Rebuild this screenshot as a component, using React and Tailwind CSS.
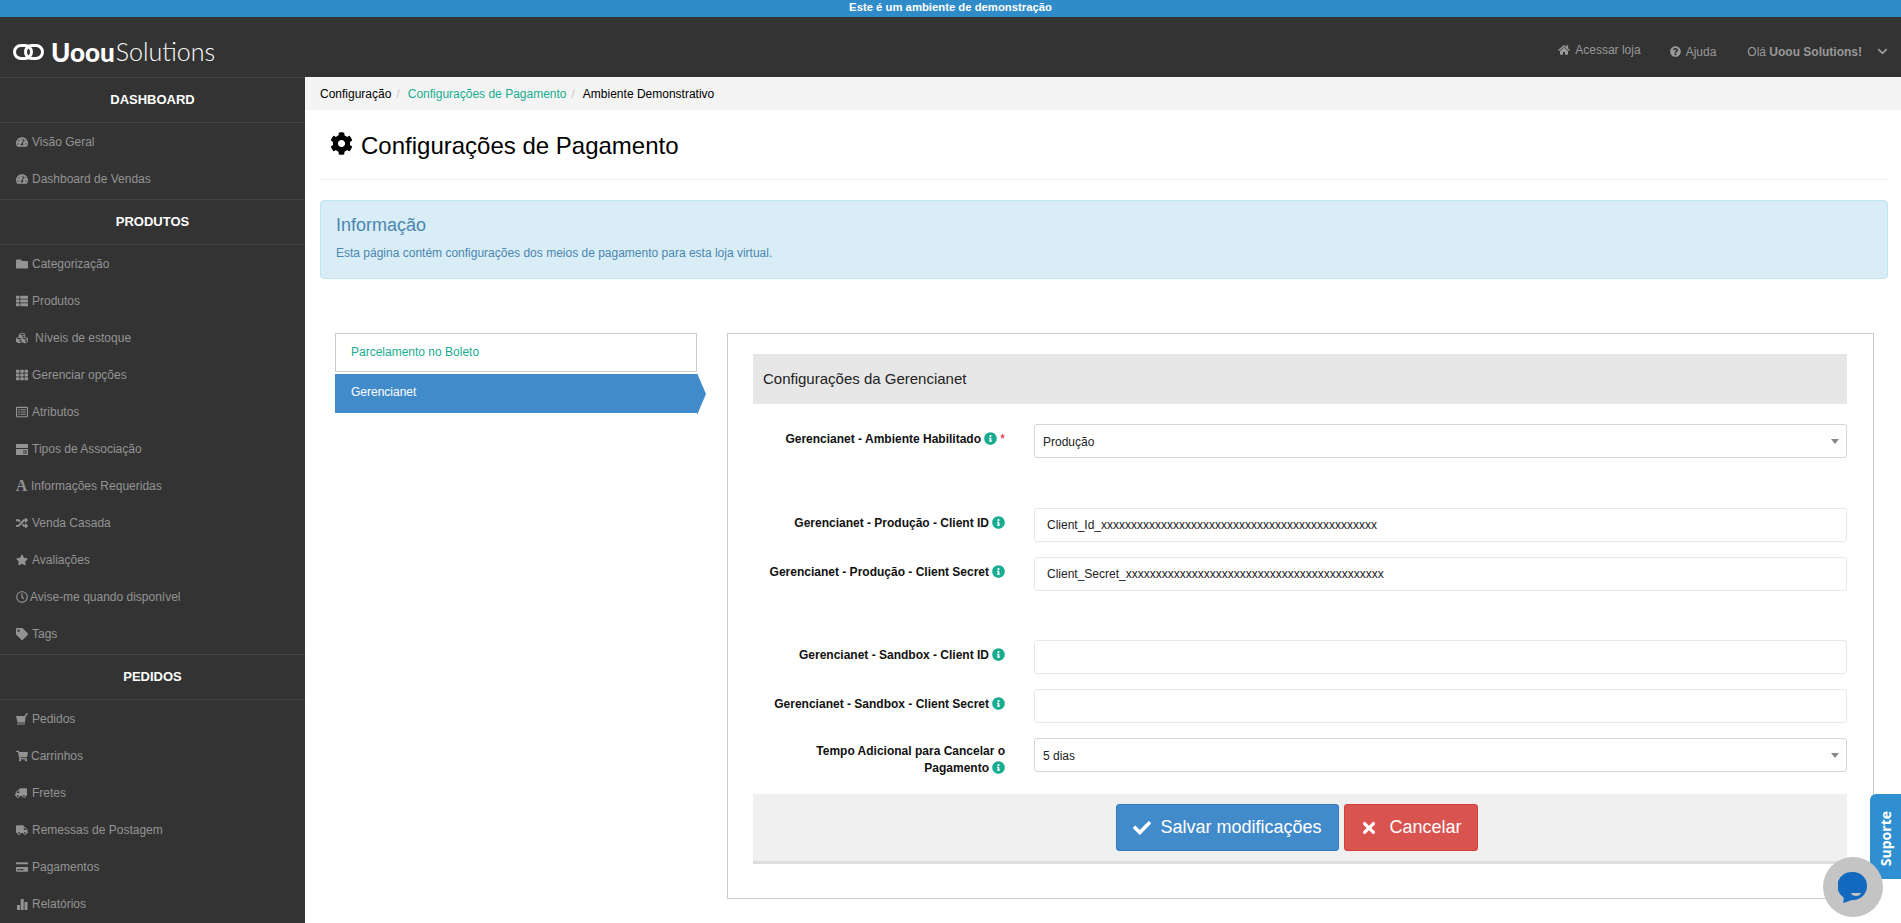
import {
  FaTachometerAlt, FaFolder, FaThList, FaCubes, FaTh, FaRegListAlt, FaRandom, FaStar, FaRegClock,
  FaTag, FaShoppingCart, FaTruck, FaCreditCard, FaHome,
  FaQuestionCircle, FaChevronDown, FaCog, FaInfoCircle, FaCheck, FaTimes,
} from "react-icons/fa";

const SerifA = () => <span className="font-['Liberation_Serif'] font-bold text-[16px] leading-none">A</span>;

// these three have no good match in the icon packages
const OrderBag = () => (
  <svg width="12" height="12" viewBox="0 0 12 12" fill="currentColor">
    <path d="M0 3h8.5L10.5 0 12 .5 9.5 4 9 9.5H1.5z"/>
    <path d="M1 10.5h8v1H1z"/>
  </svg>
);
const TypesIcon = () => (
  <svg width="12" height="11" viewBox="0 0 12 11" fill="currentColor">
    <path d="M0 0h12v4H0z"/>
    <path d="M0 5h12v6H0zM7 6.5v1h4v-1zM7 8.5v1h4v-1z" fillRule="evenodd"/>
  </svg>
);
const BarsIcon = () => (
  <svg width="12" height="12" viewBox="0 0 12 12" fill="currentColor">
    <path d="M1 7h3v5H1zM4.7 1h3v11h-3zM8.5 4h3v8h-3z"/>
  </svg>
);

const menu = [
  {
    title: "DASHBOARD",
    items: [
      {icon: FaTachometerAlt, label: "Visão Geral"},
      {icon: FaTachometerAlt, label: "Dashboard de Vendas"},
    ],
  },
  {
    title: "PRODUTOS",
    items: [
      {icon: FaFolder, label: "Categorização"},
      {icon: FaThList, label: "Produtos"},
      {icon: FaCubes, label: "Níveis de estoque", gap: "ml-[7px]"},
      {icon: FaTh, label: "Gerenciar opções"},
      {icon: FaRegListAlt, label: "Atributos"},
      {icon: TypesIcon, label: "Tipos de Associação"},
      {icon: SerifA, label: "Informações Requeridas", gap: "ml-[3px]"},
      {icon: FaRandom, label: "Venda Casada"},
      {icon: FaStar, label: "Avaliações"},
      {icon: FaRegClock, label: "Avise-me quando disponível", gap: "ml-[2px]"},
      {icon: FaTag, label: "Tags"},
    ],
  },
  {
    title: "PEDIDOS",
    items: [
      {icon: OrderBag, label: "Pedidos"},
      {icon: FaShoppingCart, label: "Carrinhos", gap: "ml-[3px]"},
      {icon: FaTruck, label: "Fretes", flip: true},
      {icon: FaTruck, label: "Remessas de Postagem"},
      {icon: FaCreditCard, label: "Pagamentos"},
      {icon: BarsIcon, label: "Relatórios"},
    ],
  },
];

function Sidebar() {
  return (
    <aside className="w-[305px] shrink-0 bg-[#333333] text-[12px] text-[#939393]">
      {menu.map((section) => (
        <div key={section.title}>
          <div className="h-[46px] border-y border-[#444444] -mb-px flex items-center justify-center pb-[1px] text-[13px] font-bold text-white">
            {section.title}
          </div>
          <ul className="pt-px pb-[1px] mt-px">
            {section.items.map((item) => (
              <li key={item.label} className="h-[37px] pl-[15px] pb-[1px] flex items-center">
                <span className={`w-[13px] flex justify-center text-[12px] ${item.flip ? "-scale-x-100" : ""}`}>
                  <item.icon/>
                </span>
                <span className={item.gap ?? "ml-[4px]"}>{item.label}</span>
              </li>
            ))}
          </ul>
        </div>
      ))}
    </aside>
  );
}

function Logo() {
  return (
    <div className="flex items-center ml-[13px] mt-[9px] text-white">
      <svg width="31" height="16" viewBox="0 0 31 16" fill="none" stroke="white" strokeWidth="3">
        <rect x="1.5" y="1.5" width="17" height="13" rx="6.5"/>
        <rect x="12.5" y="1.5" width="17" height="13" rx="6.5"/>
      </svg>
      <span className="ml-[7px] font-['Lato'] font-black text-[26px] leading-none">Uoou</span>
      <span className="ml-[1px] font-['Lato'] font-light text-[25px] leading-none">Solutions</span>
    </div>
  );
}

function Header() {
  return (
    <header className="h-[60px] bg-[#333333] flex items-center justify-between text-[12px] text-[#999999]">
      <Logo/>
      <div className="flex items-center pr-[13px] pt-[9px]">
        <span className="flex items-center gap-[5px] -mt-[4px]"><FaHome className="text-[12px]"/>Acessar loja</span>
        <span className="flex items-center gap-[5px] ml-[29px]"><FaQuestionCircle className="text-[11px]"/>Ajuda</span>
        <span className="ml-[31px]">Olá <b>Uoou Solutions!</b></span>
        <FaChevronDown className="ml-[15px] text-[11px]"/>
      </div>
    </header>
  );
}

function Info() {
  return <FaInfoCircle className="inline text-[13px] text-[#18ac90] ml-[3px] -mt-[2px]"/>;
}

function Field({label, value, select, className = "", required, twoLines}) {
  return (
    <div className={`flex ${className}`}>
      <div className={`w-[252px] h-[34px] shrink-0 text-right text-[12px] font-bold text-[#111111] ${twoLines ? "pt-[5px] leading-[17px]" : "pt-[6px]"}`}>
        {label}<Info/>{required && <span className="text-red-600 font-normal"> *</span>}
      </div>
      {select ? (
        <div className="ml-[29px] flex-1 h-[34px] border border-[#d5d5d5] rounded-[3px] flex items-center justify-between pl-[8px] pr-[7px] text-[12px] text-[#222222]">
          <span className="pt-[2px]">{value}</span>
          <span className="w-0 h-0 border-x-[4px] border-x-transparent border-t-[5px] border-t-[#888888]"></span>
        </div>
      ) : (
        <input
          readOnly
          value={value ?? ""}
          className="ml-[29px] flex-1 h-[34px] border border-[#e8e8e8] rounded-[3px] pl-[12px] text-[12px] text-[#222222] outline-none"
        />
      )}
    </div>
  );
}

export default function App() {
  const xs = "x".repeat(46);
  const xs2 = "x".repeat(43);
  return (
    <div className="relative h-[923px] overflow-hidden bg-white font-['Liberation_Sans',sans-serif]">
      <div className="h-[17px] bg-[#308cc9] text-center text-[11.3px] leading-[15px] font-bold text-white">
        Este é um ambiente de demonstração
      </div>
      <Header/>
      <div className="flex">
        <Sidebar/>
        <main className="flex-1 min-w-0">
          <div className="h-[33px] bg-[#f4f4f4] pl-[15px] flex items-center text-[12px] text-black">
            <span>Configuração</span>
            <span className="text-[#cccccc] ml-[5px]">/</span>
            <span className="text-[#18ac90] ml-[8px]">Configurações de Pagamento</span>
            <span className="text-[#cccccc] ml-[5px]">/</span>
            <span className="ml-[8px]">Ambiente Demonstrativo</span>
          </div>

          <div className="pl-[15px] pr-[13px]">
            <div className="h-[70px] border-b border-[#eeeeee] flex items-center pl-[10px] pt-[2px] text-[24px] text-black">
              <FaCog className="text-[23px] -mt-[5px]"/>
              <h1 className="ml-[8px]">Configurações de Pagamento</h1>
            </div>
            <div className="mt-[20px] h-[79px] bg-[#d9edf7] border border-[#bce8f1] rounded-[4px] pl-[15px] pt-[11px] text-[#4b86b0]">
              <h2 className="text-[18px] leading-[26px]">Informação</h2>
              <p className="text-[12px] mt-[6px]">Esta página contém configurações dos meios de pagamento para esta loja virtual.</p>
            </div>
          </div>

          <div className="flex items-start pl-[30px] mt-[54px]">
            <div className="w-[362px] shrink-0 text-[12px]">
              <div className="h-[39px] border border-[#cccccc] flex items-center pl-[15px] pb-[2px] text-[#18ac90]">Parcelamento no Boleto</div>
              <div className="relative mt-[2px] h-[39px] bg-[#428bca] flex items-center pl-[16px] pb-[4px] text-white">
                Gerencianet
                <span className="absolute left-full -top-[1px] w-0 h-0 border-y-[21px] border-y-transparent border-l-[9px] border-l-[#428bca]"></span>
              </div>
            </div>

            <section className="ml-[30px] w-[1147px] h-[566px] border border-[#cccccc] pt-[20px] pl-[25px] pr-[26px]">
              <div className="h-[50px] bg-[#e7e7e7] flex items-center pl-[10px] text-[15px] text-[#222222]">Configurações da Gerencianet</div>
              <Field className="mt-[20px]" label="Gerencianet - Ambiente Habilitado" value="Produção" select required/>
              <Field className="mt-[50px]" label="Gerencianet - Produção - Client ID" value={`Client_Id_${xs}`}/>
              <Field className="mt-[15px]" label="Gerencianet - Produção - Client Secret" value={`Client_Secret_${xs2}`}/>
              <Field className="mt-[49px]" label="Gerencianet - Sandbox - Client ID"/>
              <Field className="mt-[15px]" label="Gerencianet - Sandbox - Client Secret"/>
              <Field className="mt-[15px]" label="Tempo Adicional para Cancelar o Pagamento" value="5 dias" select twoLines/>
              <div className="mt-[22px] h-[70px] bg-[#f0f0f0] border-b-[3px] border-[#dddddd] flex justify-center items-start pt-[10px] gap-[5px] pr-[6px] text-[18px] text-white">
                <button className="w-[223px] h-[47px] bg-[#428bca] border border-[#357ebd] rounded-[3px] flex items-center justify-center gap-[9px]">
                  <FaCheck className="text-[18px]"/>Salvar modificações
                </button>
                <button className="w-[134px] h-[47px] bg-[#d9534f] border border-[#d43f3a] rounded-[3px] flex items-center justify-center gap-[11px]">
                  <FaTimes className="text-[18px]"/>Cancelar
                </button>
              </div>
            </section>
          </div>
        </main>
      </div>

      {/* Suporte tab and chat bubble sit over the page */}
      <div className="absolute left-[1870px] top-[794px] w-[31px] h-[85px] bg-[#308fd0] rounded-tl-[6px] flex items-center justify-center">
        <span className="[writing-mode:vertical-rl] rotate-180 text-[14px] font-bold font-['Open_Sans'] text-white pb-[4px]">Suporte</span>
      </div>
      <div className="absolute left-[1823px] top-[857px] w-[60px] h-[60px] rounded-full bg-[#c4c4c4] flex items-center justify-center">
        <svg width="30" height="32" viewBox="0 0 30 32">
          <path d="M15 1a14 14 0 0 1 0 28q-3 0-5 1.5l-5 1.5q1-3 .5-5.5A14 14 0 0 1 15 1z" fill="#1269bd"/>
          <path d="M13 22h10q-1 3-5 3t-5-3z" fill="#c4c4c4"/>
        </svg>
      </div>
    </div>
  );
}
